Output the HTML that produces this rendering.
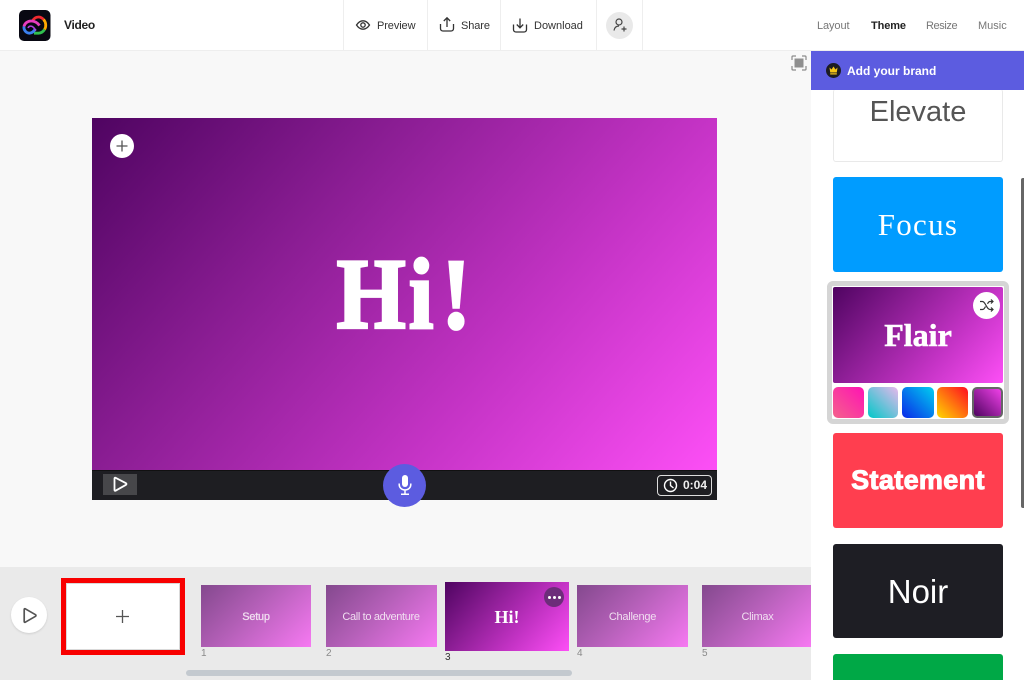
<!DOCTYPE html>
<html><head><meta charset="utf-8"><style>
*{box-sizing:border-box}
html,body{margin:0;padding:0;width:1024px;height:680px;overflow:hidden;background:#fff;font-family:"Liberation Sans",sans-serif}
.a{position:absolute}
.t{position:absolute;white-space:nowrap;line-height:14px}
.card{position:absolute;left:833px;width:170px;border-radius:3px;display:flex;align-items:center;justify-content:center}
.th{position:absolute;background:linear-gradient(135deg,#5c0a6a 0%,#a02aa5 45%,#fb4df5 100%);opacity:.72;}
.tl{position:absolute;top:609px;color:#f1dff1;font-size:11px;line-height:16px;text-align:center;white-space:nowrap;letter-spacing:-.25px}
.n{position:absolute;top:647px;font-size:10px;line-height:13px;color:#8a8a8a}
.sw{position:absolute;top:387px;height:31px;border-radius:5px}
</style></head><body>
<div class="a" style="left:0;top:0;width:1024px;height:51px;background:#fff;border-bottom:1px solid #eee"></div>
<svg class="a" style="left:19px;top:10px" width="32" height="31" viewBox="0 0 32 31"><rect x="0" y="0" width="31.5" height="31" rx="5" fill="#080812"/><g fill="none" stroke-width="2.800"><path d="M13 12C14.500 8.500 17 7 19.500 7C21.500 7 23 7.800 24.500 9.500" stroke="#f02a30"/><path d="M24.500 9.500C27 12 27.500 16.500 25.500 19.500" stroke="#ffa800"/><path d="M25.500 19.500C24 22 22 23 19.500 23.200H15" stroke="#30c050"/><path d="M20.500 15.500C18 12 15 11 12 11C8.500 11 5.500 13.500 5 16.500" stroke="#e83cc0"/><path d="M5 16.500C4.500 20 7 23.200 10.500 23.200C13.500 23.200 15 21 16.500 19" stroke="#3a80f0"/><path d="M9 18C10 15.500 13 15.500 15 18L17 20.500" stroke="#b040e0" stroke-width="1.600"/></g></svg>
<div class="t" style="left:64px;top:18px;font-size:12px;font-weight:bold;color:#222;letter-spacing:-.3px">Video</div>
<div class="a" style="left:343px;top:0;width:1px;height:50px;background:#eee"></div>
<div class="a" style="left:427px;top:0;width:1px;height:50px;background:#eee"></div>
<div class="a" style="left:500px;top:0;width:1px;height:50px;background:#eee"></div>
<div class="a" style="left:596px;top:0;width:1px;height:50px;background:#eee"></div>
<div class="a" style="left:642px;top:0;width:1px;height:50px;background:#eee"></div>
<svg class="a" style="left:355px;top:17px" width="16" height="16" viewBox="0 0 16 16" fill="none" stroke="#333" stroke-width="1.300"><path d="M1.500 8C3.500 5 5.500 3.800 8 3.800S12.500 5 14.500 8C12.500 11 10.500 12.200 8 12.200S3.500 11 1.500 8Z"/><circle cx="8" cy="8" r="2.200"/></svg>
<div class="t" style="left:377px;top:19px;font-size:11px;color:#333;letter-spacing:-.1px">Preview</div>
<svg class="a" style="left:439px;top:16px" width="16" height="17" viewBox="0 0 16 17" fill="none" stroke="#333" stroke-width="1.300"><path d="M8 11V2M4.800 5L8 1.800L11.200 5M1.500 8V12.500C1.500 14 2.500 15 4 15H12C13.500 15 14.500 14 14.500 12.500V8"/></svg>
<div class="t" style="left:461px;top:19px;font-size:11px;color:#333;letter-spacing:-.1px">Share</div>
<svg class="a" style="left:512px;top:17px" width="16" height="17" viewBox="0 0 16 17" fill="none" stroke="#333" stroke-width="1.300"><path d="M8 1.500V10.500M4.800 7.500L8 10.800L11.200 7.500M1.500 7.500V12.500C1.500 14 2.500 15 4 15H12C13.500 15 14.500 14 14.500 12.500V7.500"/></svg>
<div class="t" style="left:534px;top:19px;font-size:11px;color:#333">Download</div>
<div class="a" style="left:606px;top:12px;width:27px;height:27px;border-radius:50%;background:#e9e9e9"></div>
<svg class="a" style="left:612px;top:17px" width="16" height="16" viewBox="0 0 16 16" fill="none" stroke="#444" stroke-width="1.200"><circle cx="7" cy="5" r="3"/><path d="M2 13.500C2.500 10.500 4.500 9 7 9M9.500 12H14.500M12 9.500V14.500"/></svg>
<div class="t" style="left:817px;top:19px;font-size:11px;color:#777;letter-spacing:-.1px">Layout</div>
<div class="t" style="left:871px;top:19px;font-size:11px;font-weight:bold;color:#222;letter-spacing:-.1px">Theme</div>
<div class="t" style="left:926px;top:19px;font-size:11px;color:#777;letter-spacing:-.4px">Resize</div>
<div class="t" style="left:978px;top:19px;font-size:11px;color:#777">Music</div>

<div class="a" style="left:0;top:51px;width:811px;height:516px;background:#f8f8f8"></div>
<svg class="a" style="left:791px;top:55px" width="16" height="16" viewBox="0 0 16 16" fill="none" stroke="#8a8a8a" stroke-width="1.200"><path d="M1 5V2C1 1.400 1.400 1 2 1H5M11 1H14C14.600 1 15 1.400 15 2V5M15 11V14C15 14.600 14.600 15 14 15H11M5 15H2C1.400 15 1 14.600 1 14V11"/><rect x="3.500" y="3.500" width="9" height="9" fill="#8f8f8f" stroke="none"/></svg>

<div class="a" style="left:92px;top:118px;width:625px;height:352px;background:linear-gradient(131deg,#4f0461 0%,#8a1d93 33%,#c433c5 66%,#fd4ff6 100%)"></div>
<svg class="a" style="left:92px;top:118px" width="625" height="352"><g transform="scale(.88 1)"><text x="278 360 397" y="210" font-family="Liberation Serif" font-weight="bold" font-size="101" fill="#fff" stroke="#fff" stroke-width="2.800">Hi!</text></g></svg>
<div class="a" style="left:110px;top:134px;width:24px;height:24px;border-radius:50%;background:#fff"></div>
<svg class="a" style="left:116px;top:140px" width="12" height="12" fill="none" stroke="#555" stroke-width="1.300"><path d="M6 .5V11.500M.5 6H11.500"/></svg>
<div class="a" style="left:92px;top:470px;width:625px;height:30px;background:#1e1e22;border-top:1px solid #111"></div>
<div class="a" style="left:103px;top:474px;width:34px;height:21px;background:#47474a"></div>
<svg class="a" style="left:112px;top:476px" width="16" height="17" viewBox="0 0 16 17" fill="none" stroke="#fff" stroke-width="1.800" stroke-linejoin="round"><path d="M2.500 2.500C2.500 1.800 3 1.500 3.600 1.800L14 7.200C14.600 7.600 14.600 8.400 14 8.800L3.600 14.700C3 15 2.500 14.700 2.500 14Z"/></svg>
<div class="a" style="left:383px;top:464px;width:43px;height:43px;border-radius:50%;background:#5c5ce0"></div>
<svg class="a" style="left:396px;top:474px" width="18" height="22" viewBox="0 0 18 22"><rect x="6" y="1" width="6" height="12" rx="3" fill="#fff"/><path d="M3.200 9.500V10.500C3.200 13.800 5.800 16 9 16S14.800 13.800 14.800 10.500V9.500M9 16V20M5 20.200H13" fill="none" stroke="#fff" stroke-width="1.500"/></svg>
<div class="a" style="left:657px;top:475px;width:55px;height:21px;border:1px solid #ddd;border-radius:4px"></div>
<svg class="a" style="left:663px;top:478px" width="15" height="15" viewBox="0 0 15 15" fill="none" stroke="#fff" stroke-width="1.400"><circle cx="7.500" cy="7.500" r="6"/><path d="M7.500 3.500V7.500L10.500 10"/></svg>
<div class="t" style="left:683px;top:478px;font-size:12px;font-weight:bold;color:#eee">0:04</div>

<div class="a" style="left:0;top:567px;width:811px;height:113px;background:#eaeaea"></div>
<div class="a" style="left:11px;top:597px;width:36px;height:36px;border-radius:50%;background:#fff;box-shadow:0 1px 2px rgba(0,0,0,.12)"></div>
<svg class="a" style="left:22px;top:607px" width="16" height="17" viewBox="0 0 16 17" fill="none" stroke="#555" stroke-width="1.700" stroke-linejoin="round"><path d="M2.200 2.500C2.200 1.800 2.700 1.500 3.300 1.800L13.500 7.700C14.100 8.100 14.100 8.900 13.500 9.300L3.300 15.200C2.700 15.500 2.200 15.200 2.200 14.500Z"/></svg>
<div class="a" style="left:61px;top:578px;width:124px;height:77px;border:5px solid #f80000;background:#fff;box-shadow:inset 0 0 0 1px #d9d9d9"></div>
<svg class="a" style="left:116px;top:610px" width="13" height="13" fill="none" stroke="#555" stroke-width="1.300"><path d="M6.500 0V13M0 6.500H13"/></svg>

<div class="th" style="left:201px;top:585px;width:110px;height:62px"></div>
<div class="tl" style="left:201px;width:110px;-webkit-text-stroke:.25px #f1dff1">Setup</div>
<div class="n" style="left:201px">1</div>
<div class="th" style="left:326px;top:585px;width:111px;height:62px"></div>
<div class="tl" style="left:326px;width:110px;letter-spacing:-.35px">Call to adventure</div>
<div class="n" style="left:326px">2</div>
<div class="a" style="left:445px;top:582px;width:124px;height:69px;background:linear-gradient(131deg,#4f0461 0%,#8a1d93 33%,#c433c5 66%,#fd4ff6 100%)"></div>
<div class="t" style="left:445px;top:607px;width:124px;text-align:center;font:bold 18px/20px 'Liberation Serif',serif;color:#fff">Hi!</div>
<div class="a" style="left:544px;top:587px;width:20px;height:20px;border-radius:50%;background:#6d2d7a"></div>
<div class="a" style="left:548px;top:596px;width:3px;height:3px;border-radius:50%;background:#fff"></div>
<div class="a" style="left:553px;top:596px;width:3px;height:3px;border-radius:50%;background:#fff"></div>
<div class="a" style="left:558px;top:596px;width:3px;height:3px;border-radius:50%;background:#fff"></div>
<div class="n" style="left:445px;top:651px;color:#333">3</div>
<div class="th" style="left:577px;top:585px;width:111px;height:62px"></div>
<div class="tl" style="left:577px;width:111px">Challenge</div>
<div class="n" style="left:577px">4</div>
<div class="th" style="left:702px;top:585px;width:109px;height:62px"></div>
<div class="tl" style="left:702px;width:111px">Climax</div>
<div class="n" style="left:702px">5</div>
<div class="a" style="left:186px;top:670px;width:386px;height:6px;border-radius:3px;background:#c3c9cf"></div>

<div class="a" style="left:811px;top:51px;width:213px;height:629px;background:#fff"></div>
<div class="card" style="top:89px;height:73px;border:1px solid #e9e9e9;border-top:0;color:#555;font-size:29px;padding-bottom:25px;font-weight:normal">Elevate</div>
<div class="a" style="left:811px;top:51px;width:213px;height:39px;background:#5c5ce0"></div>
<div class="a" style="left:826px;top:63px;width:15px;height:15px;border-radius:50%;background:#1c1c22"></div>
<svg class="a" style="left:829px;top:66px" width="9" height="9" viewBox="0 0 9 9" fill="#f5c518"><path d="M.5 1.500L2.500 3.500L4.500 .5L6.500 3.500L8.500 1.500L7.800 6.500H1.200ZM1.200 7.300H7.800V8.500H1.200Z"/></svg>
<div class="t" style="left:847px;top:64px;font-size:12px;font-weight:bold;color:#fff">Add your brand</div>
<div class="card" style="top:177px;height:95px;background:#009cff;color:#fff;font:31px 'Liberation Serif',serif;letter-spacing:1.300px">Focus</div>
<div class="a" style="left:827px;top:281px;width:182px;height:143px;border:5px solid #d5d5d5;border-radius:6px;background:#fff"></div>
<div class="a" style="left:833px;top:287px;width:170px;height:96px;border-radius:2px;background:linear-gradient(131deg,#4f0461 0%,#8a1d93 33%,#c433c5 66%,#fd4ff6 100%)"></div>
<div class="t" style="left:833px;top:318px;width:170px;text-align:center;font:bold 32px/34px 'Liberation Serif',serif;color:#fff;-webkit-text-stroke:.6px #fff">Flair</div>
<div class="a" style="left:973px;top:292px;width:27px;height:27px;border-radius:50%;background:#fff"></div>
<svg class="a" style="left:979px;top:298px" width="15" height="15" viewBox="0 0 15 15" fill="none" stroke="#333" stroke-width="1.200"><path d="M1 3.500H3.500C6.500 3.500 7.500 11.500 11 11.500H14M1 11.500H3.500C5 11.500 5.800 10 6.500 8.500M8.500 5.800C9.200 4.500 10 3.500 11 3.500H14M12 1.500L14 3.500L12 5.500M12 9.500L14 11.500L12 13.500"/></svg>
<div class="sw" style="left:833px;width:31px;background:linear-gradient(45deg,#f4628c,#ff12b4)"></div>
<div class="sw" style="left:868px;width:30px;background:linear-gradient(45deg,#00c8c8,#e8b8ec)"></div>
<div class="sw" style="left:902px;width:32px;background:linear-gradient(45deg,#0a28e8,#00d0f0)"></div>
<div class="sw" style="left:937px;width:31px;background:linear-gradient(45deg,#ffd800,#ff0c20)"></div>
<div class="sw" style="left:972px;width:31px;background:linear-gradient(45deg,#4f0461,#f040e8);border:2px solid #666"></div>
<div class="card" style="top:433px;height:95px;background:#ff3e4f;color:#fff;font-size:27px;font-weight:bold;letter-spacing:.35px;-webkit-text-stroke:1px #fff">Statement</div>
<div class="card" style="top:544px;height:94px;background:#1e1e24;color:#fff;font-size:33px;padding-top:2px">Noir</div>
<div class="card" style="top:654px;height:26px;background:#00a846;border-radius:3px 3px 0 0"></div>
<div class="a" style="left:1021px;top:178px;width:3px;height:330px;background:#666;border-radius:2px 0 0 2px"></div>
</body></html>
